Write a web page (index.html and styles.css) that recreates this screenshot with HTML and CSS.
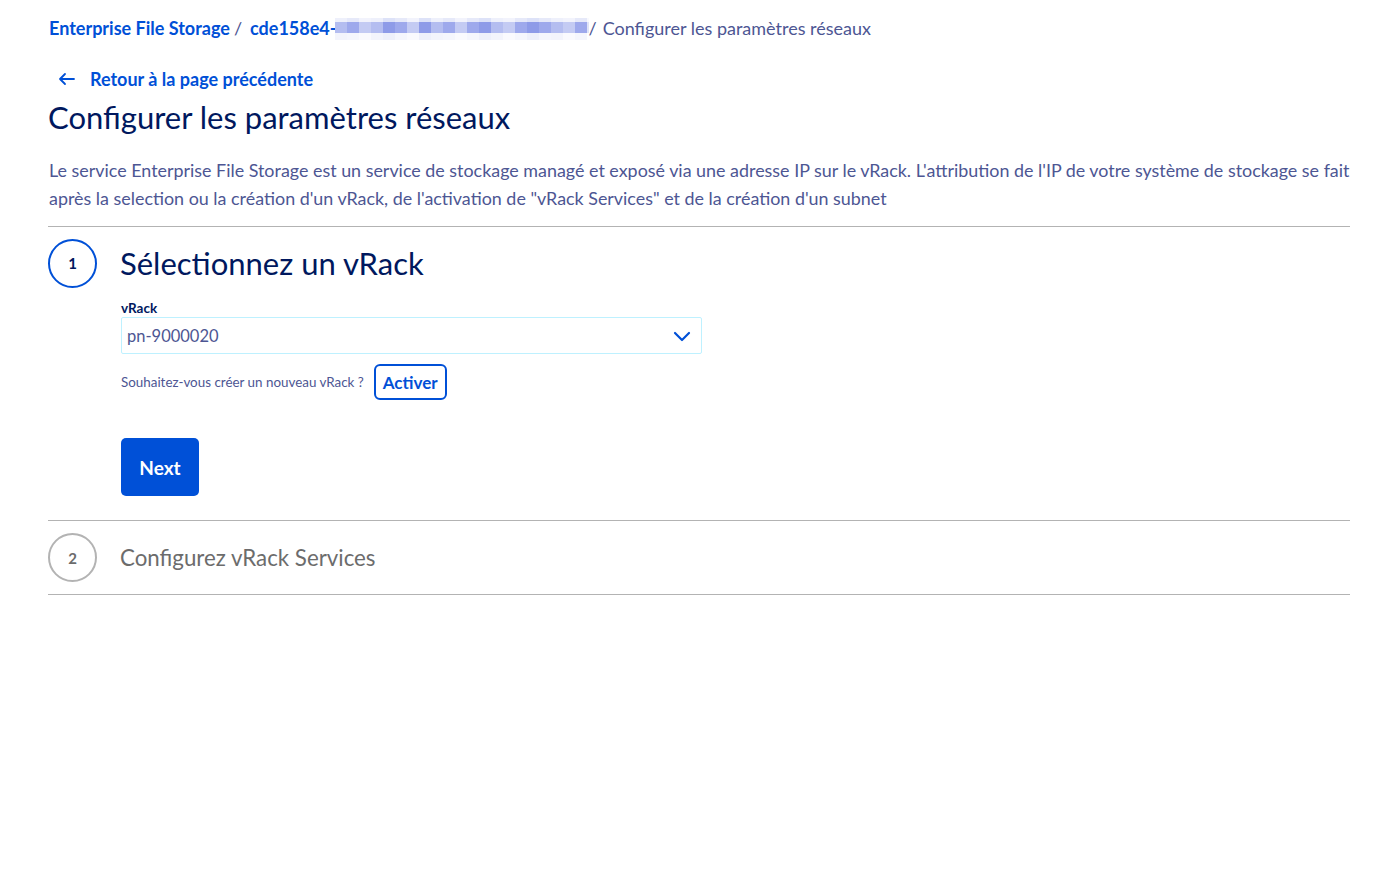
FILE: index.html
```html
<!DOCTYPE html>
<html lang="fr">
<head>
<meta charset="utf-8">
<title>Configurer les paramètres réseaux</title>
<link rel="stylesheet" href="styles.css">
</head>
<body>
<div class="page">
  <nav class="breadcrumb">
    <a class="crumb" href="#">Enterprise File Storage</a>
    <span class="sep">/</span>
    <a class="crumb" href="#">cde158e4-<span class="blur"><i class="b1"></i><i class="b2"></i><i class="b3"></i><i class="b1"></i><i class="b4"></i><i class="b2"></i><i class="b3"></i><i class="b4"></i><i class="b1"></i><i class="b2"></i><i class="b3"></i><i class="b2"></i><i class="b4"></i><i class="b1"></i><i class="b3"></i><i class="b2"></i><i class="b4"></i><i class="b2"></i><i class="b1"></i><i class="b3"></i><i class="b2"></i><i class="b5"></i></span></a>
    <span class="sep sep-tight">/</span>
    <span class="current">Configurer les paramètres réseaux</span>
  </nav>

  <a class="back" href="#">
    <svg class="back-icon" width="18" height="14" viewBox="0 0 18 14" aria-hidden="true"><path d="M16 7H2M7 2L2 7l5 5" fill="none" stroke="#0050d7" stroke-width="1.8" stroke-linecap="round" stroke-linejoin="round"/></svg>
    <span>Retour à la page précédente</span>
  </a>

  <h1 class="title">Configurer les paramètres réseaux</h1>

  <p class="intro">Le service Enterprise File Storage est un service de stockage managé et exposé via une adresse IP sur le vRack. L'attribution de l'IP de votre système de stockage se fait après la selection ou la création d'un vRack, de l'activation de "vRack Services" et de la création d'un subnet</p>

  <section class="step step-active">
    <div class="step-head">
      <div class="step-num">1</div>
      <h2 class="step-title">Sélectionnez un vRack</h2>
    </div>
    <div class="step-body">
      <label class="field-label">vRack</label>
      <div class="select">
        <span class="select-value">pn-9000020</span>
        <svg class="chevron" width="18" height="12" viewBox="0 0 18 12" aria-hidden="true"><path d="M2 3l7 7 7-7" fill="none" stroke="#0050d7" stroke-width="2.2" stroke-linecap="round" stroke-linejoin="round"/></svg>
      </div>
      <div class="create-row">
        <span class="create-text">Souhaitez-vous créer un nouveau vRack ?</span>
        <button class="btn-outline">Activer</button>
      </div>
      <button class="btn-primary">Next</button>
    </div>
  </section>

  <section class="step step-disabled">
    <div class="step-head">
      <div class="step-num">2</div>
      <h2 class="step-title">Configurez vRack Services</h2>
    </div>
  </section>
</div>
</body>
</html>
```

FILE: styles.css
```css
* { box-sizing: border-box; }
body {
  margin: 0;
  background: #fff;
  font-family: "Lato", "Open Sans", sans-serif;
  color: #4d5693;
}
.page {
  padding: 14px 50px 0 48px;
}
.breadcrumb {
  display: flex;
  align-items: center;
  font-size: 18px;
  height: 28px;
  padding-left: 1px;
}
.crumb {
  color: #0050d7;
  font-weight: 700;
  text-decoration: none;
  display: inline-flex;
  align-items: center;
}
.sep {
  margin: 0 8px 0 4px;
  color: #4d5693;
}
.sep-tight { margin: 0 6px 0 0; }
.current { color: #4d5693; }
.blur {
  display: inline-flex;
  height: 22px;
  margin-top: 2px;
  margin-left: -2px;
}
.blur i {
  display: block;
  width: 12px;
  height: 100%;
}
.blur .b1 { background: linear-gradient(#eef0fb 0 20%, #b4bdf0 20% 70%, #f3f4fc 70%); }
.blur .b2 { background: linear-gradient(#e6e9f9 0 20%, #9ea9ec 20% 70%, #f5f6fd 70%); }
.blur .b3 { background: linear-gradient(#f2f3fc 0 20%, #c4cbf3 20% 70%, #fafafe 70%); }
.blur .b4 { background: linear-gradient(#dde2f8 0 20%, #8e9be8 20% 70%, #eef0fb 70%); }
.blur .b5 { background: linear-gradient(#f8f9fe 0 20%, #dfe3f8 20% 70%, #fff 70%); width: 2px; }

.back {
  display: inline-flex;
  align-items: center;
  gap: 14px;
  margin: 26px 0 0 10px;
  color: #0050d7;
  font-weight: 700;
  font-size: 18px;
  text-decoration: none;
}
.back-icon { display: block; }
.title {
  margin: 7px 0 0;
  font-size: 31px;
  font-weight: 400;
  color: #00185e;
  line-height: 40px;
}
.intro {
  margin: 19px 0 0;
  padding: 0 0 14px 1px;
  font-size: 17.9px;
  line-height: 28px;
  color: #4d5693;
}
.step {
  border-top: 1px solid #b3b3b3;
}
.step-disabled {
  border-bottom: 1px solid #b3b3b3;
}
.step-head {
  display: flex;
  align-items: center;
  gap: 23px;
  height: 73px;
}
.step-active .step-head { height: 72px; }
.step-num {
  width: 49px;
  height: 49px;
  border-radius: 50%;
  border: 2px solid #0050d7;
  display: flex;
  align-items: center;
  justify-content: center;
  font-weight: 700;
  font-size: 15px;
  color: #00185e;
}
.step-title {
  margin: 0;
  font-size: 31px;
  font-weight: 400;
  color: #00185e;
}
.step-disabled .step-num {
  border-color: #b3b3b3;
  color: #6c6c6c;
}
.step-disabled .step-title {
  font-size: 22.3px;
  color: #6c6c6c;
}
.step-body {
  padding: 0 0 24px 73px;
}
.field-label {
  display: block;
  font-size: 13.5px;
  font-weight: 700;
  color: #00185e;
  line-height: 18px;
}
.select {
  width: 581px;
  height: 37px;
  border: 1px solid #bef1ff;
  border-radius: 2px;
  display: flex;
  align-items: center;
  justify-content: space-between;
  padding: 0 10px 0 5px;
}
.select-value {
  font-size: 16.5px;
  color: #4d5693;
}
.chevron { display: block; }
.create-row {
  display: flex;
  align-items: center;
  gap: 10px;
  margin-top: 10px;
}
.create-text {
  font-size: 13.4px;
  color: #4d5693;
}
.btn-outline {
  height: 36px;
  padding: 0 7px;
  border: 2px solid #0050d7;
  border-radius: 6px;
  background: #fff;
  color: #0050d7;
  font-family: inherit;
  font-weight: 700;
  font-size: 17px;
}
.btn-primary {
  display: block;
  margin-top: 38px;
  width: 78px;
  height: 58px;
  border: none;
  border-radius: 5px;
  background: #0050d7;
  color: #fff;
  font-family: inherit;
  font-weight: 700;
  font-size: 19px;
}
```
